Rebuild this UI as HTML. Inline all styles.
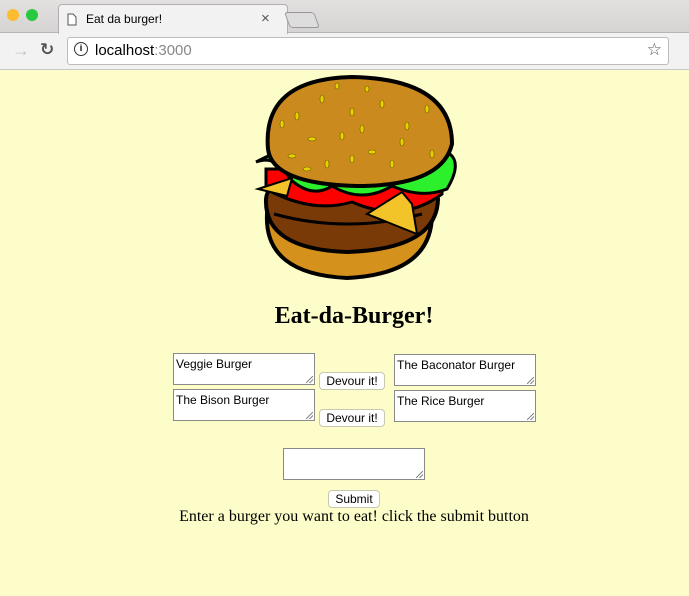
<!DOCTYPE html>
<html><head><style>
*{box-sizing:border-box}
body{margin:0;width:689px;height:596px;overflow:hidden;background:#fdfdc9;font-family:"Liberation Serif",serif;position:relative}
.top{position:absolute;left:0;top:0;width:689px;height:70px;background:#f2f2f2;border-bottom:1px solid #c8c8c8}
.tabbar{position:absolute;left:0;top:0;width:689px;height:33px;background:linear-gradient(#e3e0e0,#d6d3d3);border-bottom:1px solid #b5b5b5}
.tab{position:absolute;left:50px;top:4px;width:240px;height:30px;background:#f2f2f2;border:1px solid #b0b0b0;border-bottom:none;border-radius:4px 4px 0 0;font:12px "Liberation Sans",sans-serif}
.dot{position:absolute;top:9px;width:12px;height:12px;border-radius:50%}
.url{position:absolute;left:67px;top:37px;width:602px;height:28px;background:#fff;border:1px solid #bcbcbc;border-radius:3px;font:15px "Liberation Sans",sans-serif}
.ta{position:absolute;width:142px;height:32px;background:#fff;border:1px solid #8a8a8a;font:12px "Liberation Sans",sans-serif;padding:3px 2px;color:#000}
.ta::after{content:"";position:absolute;right:1px;bottom:1px;width:7px;height:7px;background:linear-gradient(135deg,transparent 45%,#888 46%,#888 54%,transparent 55%,transparent 70%,#888 71%,#888 79%,transparent 80%)}
.btn{position:absolute;height:18px;background:#fff;border:1px solid #c8c8b0;border-radius:4px;font:12px "Liberation Sans",sans-serif;text-align:center;line-height:16px}
</style></head><body>
<div class="top">
<div class="tabbar"></div>
<div class="dot" style="left:7px;background:#fdbc2e"></div>
<div class="dot" style="left:26px;background:#28c840"></div>
<div class="tab" style="left:58px;width:230px"><svg style="position:absolute;left:8px;top:8px" width="10" height="13"><path d="M1 1h5l3 3v8H1z" fill="#fff" stroke="#555"/></svg><span style="position:absolute;left:27px;top:7px">Eat da burger!</span><span style="position:absolute;left:202px;top:5px;font-size:15px;color:#555">×</span></div>
<div style="position:absolute;left:287px;top:12px;width:30px;height:16px;background:#ddd;border:1px solid #999;border-radius:3px;transform:skewX(20deg)"></div>
<div style="position:absolute;left:12px;top:40px;font:18px 'Liberation Sans';color:#c4c4c4">→</div>
<div style="position:absolute;left:40px;top:40px;font:bold 17px 'DejaVu Sans';color:#555">↻</div>
<div class="url"><span style="position:absolute;left:6px;top:4px;width:14px;height:14px;border:1.5px solid #333;border-radius:50%;font:bold 9px 'Liberation Sans';text-align:center;line-height:11px">i</span><span style="position:absolute;left:27px;top:4px">localhost<span style="color:#888">:3000</span></span><span style="position:absolute;right:6px;top:2px;font-size:17px;color:#555">☆</span></div>
</div>
<svg style="position:absolute;left:252px;top:74px" width="216" height="208" viewBox="0 0 216 208">
<path d="M15 140 Q12 200 95 204 Q180 200 180 140 Q170 115 95 115 Q18 115 15 140z" fill="#d4911c" stroke="#000" stroke-width="4"/>
<path d="M14 125 Q12 175 95 178 Q185 175 186 125 Q180 96 100 96 Q16 96 14 125z" fill="#7a3a08" stroke="#000" stroke-width="4"/>
<path d="M22 140 Q95 160 170 140" fill="none" stroke="#000" stroke-width="3"/>
<path d="M14 115 Q60 140 100 128 Q150 150 190 120 L190 95 L14 95z" fill="#f00" stroke="#000" stroke-width="3"/>
<path d="M4 88 Q25 80 38 105 Q60 125 80 112 Q110 130 140 112 Q170 125 195 115 Q210 90 198 80 Q190 70 175 80 L20 80z" fill="#2cf02c" stroke="#000" stroke-width="3"/>
<path d="M6 115 L40 104 L35 122z" fill="#f3c42a" stroke="#000" stroke-width="2"/>
<path d="M115 140 L150 118 L160 130 L165 160 L140 150z" fill="#f3c42a" stroke="#000" stroke-width="2"/>
<path d="M16 75 Q10 5 100 3 Q200 5 200 70 Q190 112 105 112 Q20 110 16 75z" fill="#ca8a1e" stroke="#000" stroke-width="4"/>
<g fill="#e8d000" stroke="#6b5a00" stroke-width="0.6">
<ellipse cx="30" cy="50" rx="2" ry="4"/><ellipse cx="45" cy="42" rx="2" ry="4"/><ellipse cx="70" cy="25" rx="2" ry="4"/><ellipse cx="100" cy="38" rx="2" ry="4"/><ellipse cx="130" cy="30" rx="2" ry="4"/><ellipse cx="155" cy="52" rx="2" ry="4"/><ellipse cx="60" cy="65" rx="4" ry="2"/><ellipse cx="90" cy="62" rx="2" ry="4"/><ellipse cx="120" cy="78" rx="4" ry="2"/><ellipse cx="150" cy="68" rx="2" ry="4"/><ellipse cx="40" cy="82" rx="4" ry="2"/><ellipse cx="75" cy="90" rx="2" ry="4"/><ellipse cx="140" cy="90" rx="2" ry="4"/><ellipse cx="110" cy="55" rx="2" ry="4"/><ellipse cx="85" cy="12" rx="2" ry="3"/><ellipse cx="115" cy="15" rx="2" ry="3"/><ellipse cx="55" cy="95" rx="4" ry="2"/><ellipse cx="100" cy="85" rx="2" ry="4"/><ellipse cx="175" cy="35" rx="2" ry="4"/><ellipse cx="180" cy="80" rx="2" ry="4"/>
</g>
</svg>
<div style="position:absolute;left:0;width:708px;top:303px;text-align:center;font-weight:bold;font-size:24px">Eat-da-Burger!</div>
<div class="ta" style="left:173px;top:353px">Veggie Burger</div>
<div class="ta" style="left:173px;top:389px">The Bison Burger</div>
<div class="ta" style="left:394px;top:354px">The Baconator Burger</div>
<div class="ta" style="left:394px;top:390px">The Rice Burger</div>
<div class="btn" style="left:319px;top:372px;width:66px">Devour it!</div>
<div class="btn" style="left:319px;top:409px;width:66px">Devour it!</div>
<div class="ta" style="left:283px;top:448px"></div>
<div class="btn" style="left:328px;top:490px;width:52px">Submit</div>
<div style="position:absolute;left:0;width:708px;top:508px;text-align:center;font-size:16px">Enter a burger you want to eat! click the submit button</div>
</body></html>
